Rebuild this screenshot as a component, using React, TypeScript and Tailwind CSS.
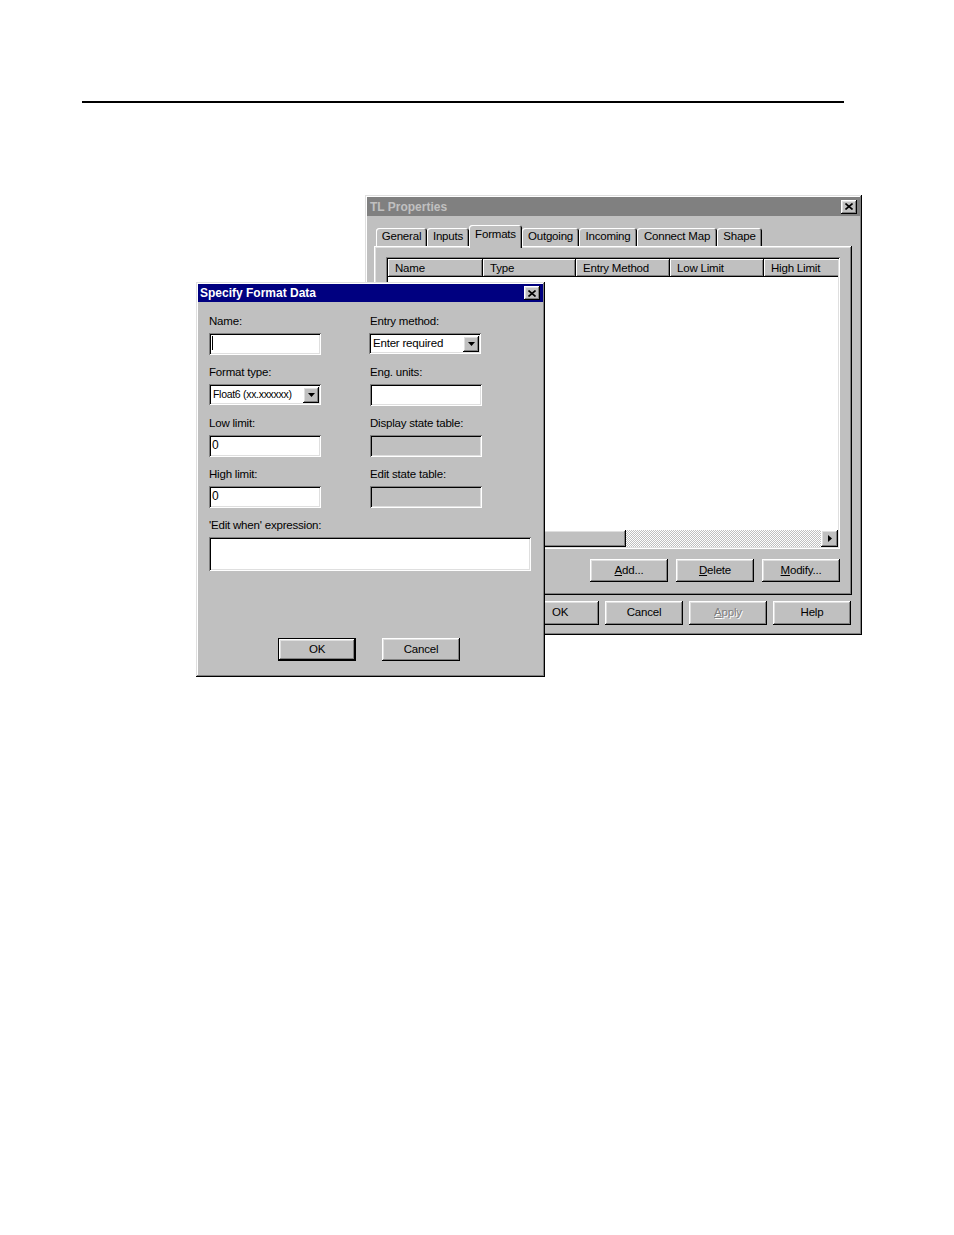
import React from 'react';

// Win95 bevels
const windowBevel =
  'shadow-[inset_-1px_-1px_0_#000,inset_1px_1px_0_#dfdfdf,inset_-2px_-2px_0_#808080,inset_2px_2px_0_#fff]';
const raised =
  'shadow-[inset_-1px_-1px_0_#000,inset_1px_1px_0_#fff,inset_-2px_-2px_0_#808080,inset_2px_2px_0_#dfdfdf]';
const sunken =
  'shadow-[inset_1px_1px_0_#808080,inset_-1px_-1px_0_#fff,inset_2px_2px_0_#000,inset_-2px_-2px_0_#dfdfdf]';
const headerBevel = 'shadow-[inset_-1px_-1px_0_#000,inset_1px_1px_0_#fff,inset_-2px_-2px_0_#808080]';

const font = "font-['Liberation_Sans',Arial,sans-serif]";

const CloseBox: React.FC = () => (
  <div className={`w-[16px] h-[14px] bg-[#c0c0c0] flex items-center justify-center ${raised}`}>
    <svg width="8" height="7" viewBox="0 0 8 7">
      <path d="M0.5 0.5L7.5 6.5M7.5 0.5L0.5 6.5" stroke="#000" strokeWidth="1.6" />
    </svg>
  </div>
);

const DownArrow: React.FC = () => (
  <div className={`w-[16px] h-[16px] bg-[#c0c0c0] flex items-center justify-center ${raised}`}>
    <svg width="7" height="4" viewBox="0 0 7 4">
      <polygon points="0,0 7,0 3.5,4" fill="#000" />
    </svg>
  </div>
);

const Button: React.FC<{ children: React.ReactNode; isDefault?: boolean; disabled?: boolean; h?: string }> = ({
  children,
  isDefault,
  disabled,
  h = 'h-[23px]',
}) => (
  <div
    className={`w-[78px] ${h} bg-[#c0c0c0] flex items-center justify-center text-[11.5px] tracking-[-0.2px] ${
      isDefault ? 'border border-black' : ''
    } ${raised} ${disabled ? 'text-[#808080] [text-shadow:1px_1px_0_#fff]' : 'text-black'}`}
  >
    {children}
  </div>
);

const Field: React.FC<{ value?: string; disabled?: boolean; cursor?: boolean; h?: string; w?: string }> = ({
  value,
  disabled,
  cursor,
  h = 'h-[22px]',
  w = 'w-[112px]',
}) => (
  <div
    className={`${w} ${h} ${disabled ? 'bg-[#c0c0c0]' : 'bg-white'} ${sunken} px-[3px] pt-[3px] text-[12px] leading-[15px] flex items-start`}
  >
    {cursor && <span className="w-[1px] h-[14px] bg-black" />}
    {value}
  </div>
);

const Select: React.FC<{ value: string; small?: boolean }> = ({ value, small }) => (
  <div className={`w-[112px] h-[21px] bg-white ${sunken} flex items-center justify-between pl-[4px] pr-[2px]`}>
    <span className={small ? 'text-[10.5px] tracking-[-0.3px]' : 'text-[11.5px] tracking-[-0.2px]'}>{value}</span>
    <DownArrow />
  </div>
);

const Label: React.FC<{ children: React.ReactNode }> = ({ children }) => (
  <div className="h-[14px] leading-[14px] text-[11.5px] mb-[5px] tracking-[-0.2px]">{children}</div>
);

const tabs = [
  { name: 'General', w: 'w-[51px]' },
  { name: 'Inputs', w: 'w-[42px]' },
  { name: 'Formats', w: 'w-[53px]', active: true },
  { name: 'Outgoing', w: 'w-[57px]' },
  { name: 'Incoming', w: 'w-[58px]' },
  { name: 'Connect Map', w: 'w-[80px]' },
  { name: 'Shape', w: 'w-[45px]' },
];

const columns = ['Name', 'Type', 'Entry Method', 'Low Limit', 'High Limit'];

const PropertiesWindow: React.FC = () => (
  <div className={`ml-[365px] w-[497px] h-[440px] bg-[#c0c0c0] p-[2px] ${windowBevel}`}>
    <div className="h-[19px] bg-[#808080] flex items-center justify-between pl-[3px] pr-[3px]">
      <span className="text-[12px] font-bold text-[#c0c0c0]">TL Properties</span>
      <CloseBox />
    </div>
    <div className="pl-[7px] pt-[9px]">
      <div className="flex items-end h-[21px] pl-[2px] relative z-10">
        {tabs.map((t) => (
          <div
            key={t.name}
            className={`${t.w} flex items-center justify-center text-[11.5px] tracking-[-0.2px] rounded-t-[3px] bg-[#c0c0c0] shadow-[inset_1px_1px_0_#fff,inset_-1px_0_0_#000,inset_-2px_0_0_#808080] ${
              t.active ? 'h-[23px] -mb-[2px] pb-[3px]' : 'h-[18px]'
            }`}
          >
            {t.name}
          </div>
        ))}
      </div>
      <div className={`w-[478px] h-[349px] ${raised} pt-[11px] pl-[12px]`}>
        <div className={`w-[454px] h-[292px] bg-white ${sunken} p-[2px] flex flex-col`}>
          <div className="flex h-[18px] overflow-hidden shrink-0">
            {columns.map((c, i) => (
              <div
                key={c}
                className={`${i === 1 ? 'w-[93px]' : i === 0 ? 'w-[95px]' : 'w-[94px]'} shrink-0 h-[18px] bg-[#c0c0c0] ${headerBevel} text-[11.5px] tracking-[-0.2px] leading-[18px] pl-[7px]`}
              >
                {c}
              </div>
            ))}
          </div>
          <div className="flex-1" />
          <div className="flex h-[17px] shrink-0">
            <div className={`w-[17px] h-[17px] bg-[#c0c0c0] ${raised}`} />
            <div className={`w-[221px] h-[17px] bg-[#c0c0c0] ${raised}`} />
            <div className="flex-1 h-[17px] bg-[repeating-conic-gradient(#c0c0c0_0_25%,#fff_0_50%)] bg-[length:2px_2px]" />
            <div className={`w-[17px] h-[17px] bg-[#c0c0c0] ${raised} flex items-center justify-center`}>
              <svg width="4" height="7" viewBox="0 0 4 7">
                <polygon points="0,0 4,3.5 0,7" fill="#000" />
              </svg>
            </div>
          </div>
        </div>
        <div className="flex justify-end gap-[8px] pr-[12px] mt-[10px]">
          <Button>
            <span>
              <u>A</u>dd...
            </span>
          </Button>
          <Button>
            <span>
              <u>D</u>elete
            </span>
          </Button>
          <Button>
            <span>
              <u>M</u>odify...
            </span>
          </Button>
        </div>
      </div>
      <div className="flex justify-end gap-[6px] mt-[6px] pr-[1px] w-[478px]">
        <Button h="h-[24px]">OK</Button>
        <Button h="h-[24px]">Cancel</Button>
        <Button h="h-[24px]" disabled>
          <span>
            <u>A</u>pply
          </span>
        </Button>
        <Button h="h-[24px]">Help</Button>
      </div>
    </div>
  </div>
);

const FormatDialog: React.FC = () => (
  <div className={`absolute left-[196px] top-[87px] w-[349px] h-[395px] bg-[#c0c0c0] p-[2px] z-20 ${windowBevel}`}>
    <div className="h-[18px] bg-[#000080] flex items-center justify-between pl-[2px] pr-[3px]">
      <span className="text-[12px] font-bold text-white">Specify Format Data</span>
      <CloseBox />
    </div>
    <div className="pl-[11px] pt-[12px]">
      <div className="grid grid-cols-[112px_112px] gap-x-[49px] gap-y-[10px]">
        <div>
          <Label>Name:</Label>
          <Field cursor />
        </div>
        <div className="-ml-[1px]">
          <div className="ml-[1px]">
            <Label>Entry method:</Label>
          </div>
          <Select value="Enter required" />
        </div>
        <div>
          <Label>Format type:</Label>
          <Select value="Float6 (xx.xxxxxx)" small />
        </div>
        <div>
          <Label>Eng. units:</Label>
          <Field />
        </div>
        <div>
          <Label>Low limit:</Label>
          <Field value="0" />
        </div>
        <div>
          <Label>Display state table:</Label>
          <Field disabled />
        </div>
        <div>
          <Label>High limit:</Label>
          <Field value="0" />
        </div>
        <div>
          <Label>Edit state table:</Label>
          <Field disabled />
        </div>
      </div>
      <div className="mt-[10px]">
        <Label>'Edit when' expression:</Label>
        <Field w="w-[322px]" h="h-[34px]" />
      </div>
      <div className="flex justify-center gap-[26px] mt-[67px] pr-[14px]">
        <Button isDefault>OK</Button>
        <Button>Cancel</Button>
      </div>
    </div>
  </div>
);

export default function App() {
  return (
    <div className={`w-[954px] h-[1235px] bg-white text-black ${font}`}>
      <div className="pt-[101px] pl-[82px]">
        <div className="w-[762px] h-[2px] bg-black" />
      </div>
      <div className="relative mt-[92px]">
        <PropertiesWindow />
        <FormatDialog />
      </div>
    </div>
  );
}
